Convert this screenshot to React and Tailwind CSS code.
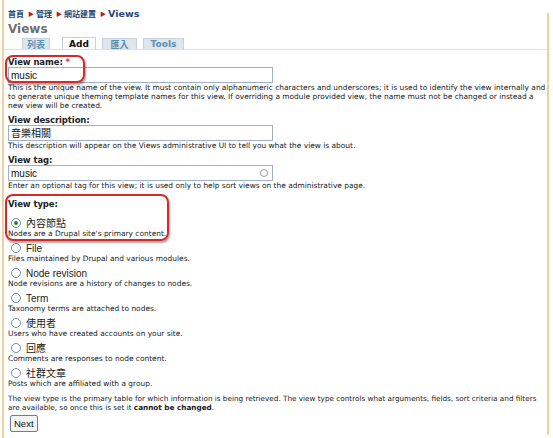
import React from "react";

const types = [
  { label: "內容節點", desc: "Nodes are a Drupal site's primary content.", checked: true },
  { label: "File", desc: "Files maintained by Drupal and various modules." },
  { label: "Node revision", desc: "Node revisions are a history of changes to nodes." },
  { label: "Term", desc: "Taxonomy terms are attached to nodes." },
  { label: "使用者", desc: "Users who have created accounts on your site." },
  { label: "回應", desc: "Comments are responses to node content." },
  { label: "社群文章", desc: "Posts which are affiliated with a group." },
];

const sans = "font-['DejaVu_Sans','Noto_Sans_CJK_TC',sans-serif]";

function Radio({ checked }) {
  return (
    <span className="relative inline-block w-[10px] h-[10px] rounded-full border border-[#6f8fae] bg-white mr-[5px] shrink-0">
      {checked && <span className="absolute left-[2px] top-[2px] w-[4px] h-[4px] rounded-full bg-[#2e7d32]" />}
    </span>
  );
}

function Field({ label, required, value, desc, circle }) {
  return (
    <div>
      <div className="text-[8.5px] font-bold leading-[10px] tracking-[-0.1px] text-[#222]">
        {label}: {required && <span className="text-[#e33]">*</span>}
      </div>
      <div className="w-[265px] h-[16px] border border-[#9fb0c8] bg-white flex items-center px-[2px] text-[10px] text-[#111] font-['Liberation_Sans','Noto_Sans_CJK_TC',sans-serif]">
        <span className="flex-1">{value}</span>
        {circle && <span className="w-[8px] h-[8px] rounded-full border border-[#999] mr-[2px]" />}
      </div>
      <div className="text-[7.45px] leading-[9px] text-[#222]">{desc}</div>
    </div>
  );
}

const tab = "h-[11px] leading-[11px] text-center bg-[#dde6ed] border border-[#c5d2dc] border-b-0 text-[9px] font-bold text-[#5b8fb4]";

export default function App() {
  return (
    <div className={`relative w-[553px] h-[438px] bg-white overflow-hidden ${sans}`}>
      <div className="absolute left-[2px] top-0 h-[438px] w-[2px] bg-[#f3cf9e]" />
      <div className="absolute left-[547px] top-[13px] h-[422px] w-[2px] bg-[#f3cf9e]" />

      <div className="pl-[8px] pr-[6px] pt-[8px]">
        <div className="flex items-center gap-[2px] h-[12px] text-[8px] font-bold text-[#1f4a7a] leading-[12px] font-['Noto_Sans_CJK_TC',sans-serif]">
          <span>首頁</span>
          <span className="text-[#b02020] text-[6px] ml-[2px]">▶</span>
          <span>管理</span>
          <span className="text-[#b02020] text-[6px] ml-[2px]">▶</span>
          <span>網站建置</span>
          <span className="text-[#b02020] text-[6px] ml-[2px]">▶</span>
          <span className={`${sans} text-[9.5px]`}>Views</span>
        </div>
        <div className="mt-[2px] h-[15px] text-[12px] font-bold leading-[15px] text-[#707070]">Views</div>
        <div className="flex pl-[14px] mt-[1px] h-[11px] items-end">
          <span className={`${tab} w-[28px] font-['Noto_Sans_CJK_TC',sans-serif]`}>列表</span>
          <span className="ml-[12px] w-[34px] h-[12px] leading-[12px] text-center bg-white border border-[#c5d2dc] border-b-0 text-[9px] font-bold text-[#111]">Add</span>
          <span className={`${tab} ml-[6px] w-[35px] font-['Noto_Sans_CJK_TC',sans-serif]`}>匯入</span>
          <span className={`${tab} ml-[6px] w-[41px]`}>Tools</span>
        </div>
      </div>
      <div className="ml-[4px] mr-[6px] h-px bg-[#e6dde6]" />

      <div className="pl-[8px] pr-[6px] pt-[7px] flex flex-col">
        <div className="flex flex-col gap-[5px]">
          <Field
            label="View name"
            required
            value="music"
            desc="This is the unique name of the view. It must contain only alphanumeric characters and underscores; it is used to identify the view internally and to generate unique theming template names for this view. If overriding a module provided view, the name must not be changed or instead a new view will be created."
          />
          <Field
            label="View description"
            value="音樂相關"
            desc="This description will appear on the Views administrative UI to tell you what the view is about."
          />
          <Field
            label="View tag"
            value="music"
            circle
            desc="Enter an optional tag for this view; it is used only to help sort views on the administrative page."
          />
        </div>

        <div className="mt-[9px]">
          <div className="text-[8.5px] font-bold leading-[10px] tracking-[-0.1px] text-[#222]">View type:</div>
          <div className="mt-[8px] flex flex-col gap-[4px]">
            {types.map((t) => (
              <div key={t.label}>
                <div className="flex items-center pl-[3px] h-[12px] text-[10px] text-[#222] font-['Liberation_Sans','Noto_Sans_CJK_TC',sans-serif]">
                  <Radio checked={t.checked} />
                  <span>{t.label}</span>
                </div>
                <div className="text-[7.45px] leading-[9px] text-[#222]">{t.desc}</div>
              </div>
            ))}
          </div>
        </div>

        <div className="mt-[6px] text-[7.25px] leading-[9px] text-[#222]">
          The view type is the primary table for which information is being retrieved. The view type controls what arguments, fields, sort criteria and filters are available, so once this is set it <b>cannot be changed</b>.
        </div>

        <div className="mt-[3px] flex">
          <button className="ml-[2px] px-[3px] h-[17px] border border-[#6a7f99] rounded-[2px] bg-[#f4f4f4] text-[9.5px] leading-[15px] text-[#111] font-['Liberation_Sans',sans-serif]">Next</button>
        </div>
      </div>

      <div className="absolute left-[5px] top-[55px] w-[80px] h-[28px] rounded-[8px] border-2 border-[#d42a2a] shadow-[1px_2px_2px_rgba(0,0,0,0.35)]" />
      <div className="absolute left-[5px] top-[194px] w-[164px] h-[47px] rounded-[8px] border-2 border-[#d42a2a] shadow-[1px_2px_2px_rgba(0,0,0,0.35)]" />
    </div>
  );
}
